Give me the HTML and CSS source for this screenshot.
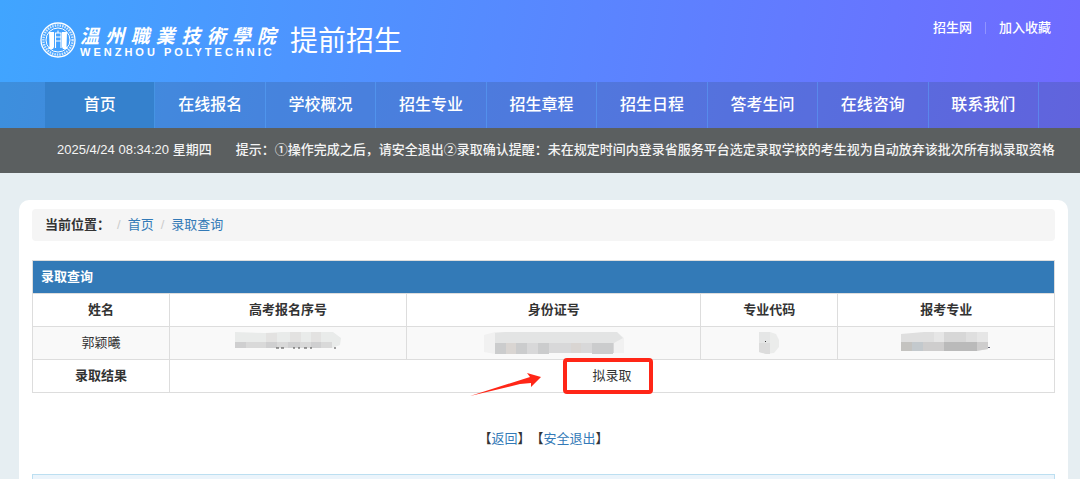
FILE: index.html
```html
<!DOCTYPE html>
<html lang="zh-CN">
<head>
  <meta charset="UTF-8" />
  <meta name="viewport" content="width=device-width, initial-scale=1.0" />
  <title>提前招生</title>
  <link rel="stylesheet" href="styles.css">
</head>
<body>
  <header>
    <div class="top">
      <a class="brand" href="#index">
        <svg class="seal" viewBox="0 0 36 36" width="36" height="36" aria-hidden="true">
          <circle cx="18" cy="18" r="17" fill="none" stroke="#fff" stroke-width="1.3"/>
          <circle cx="18" cy="18" r="14.6" fill="none" stroke="#fff" stroke-width="2.4" stroke-dasharray="1.5 1" opacity=".75"/>
          <circle cx="18" cy="18" r="12" fill="none" stroke="#fff" stroke-width="1"/>
          <path d="M9 10h5v15l-1 2H8l1.5-2.5zM27 10h-5v15l1 2h5l-1.5-2.5z" fill="#fff"/>
          <path d="M15.5 26V11h5.5v15M15.5 15h5M15.5 19h5M18 8.5V11" fill="none" stroke="#fff" stroke-width="1.1"/>
        </svg>
        <span class="school">
          <span class="school-cn">溫州職業技術學院</span>
          <span class="school-en">WENZHOU POLYTECHNIC</span>
        </span>
        <span class="site-name">提前招生</span>
      </a>
      <div class="top-links">
        <a href="#home">招生网</a>
        <i></i>
        <a href="#favorite">加入收藏</a>
      </div>
    </div>
    <nav>
      <a class="active" href="#index">首页</a>
      <a href="#signup">在线报名</a>
      <a href="#about">学校概况</a>
      <a href="#majors">招生专业</a>
      <a href="#rules">招生章程</a>
      <a href="#schedule">招生日程</a>
      <a href="#faq">答考生问</a>
      <a href="#consult">在线咨询</a>
      <a href="#contact">联系我们</a>
    </nav>
  </header>

  <div class="notice">
    <span>2025/4/24 08:34:20 星期四</span>
    <span>提示：①操作完成之后，请安全退出②录取确认提醒：未在规定时间内登录省服务平台选定录取学校的考生视为自动放弃该批次所有拟录取资格</span>
  </div>

  <main>
    <div class="breadcrumb">
      <b>当前位置：</b>
      <i>/</i>
      <a href="#index">首页</a>
      <i>/</i>
      <a href="#result">录取查询</a>
    </div>

    <table class="result">
      <colgroup>
        <col class="col-name">
        <col class="col-exam">
        <col class="col-id">
        <col class="col-code">
        <col class="col-major">
      </colgroup>
      <thead>
        <tr><th class="title" colspan="5">录取查询</th></tr>
        <tr>
          <th>姓名</th>
          <th>高考报名序号</th>
          <th>身份证号</th>
          <th>专业代码</th>
          <th>报考专业</th>
        </tr>
      </thead>
      <tbody>
        <tr class="striped">
          <td>郭颖曦</td>
          <td>
            <svg class="mask" viewBox="0 0 106 22" width="106" height="22" aria-hidden="true">
              <path d="M0 0l30 1 17-1h51l8 6-1 7-8 3H0z" fill="#e9ebea"/>
              <path d="M31 1h11v10H31zM55 0h11v11H55zM76 0h10v11H76z" fill="#e3e2e1"/>
              <path d="M0 10h97v6H0z" fill="#d9d9d9"/>
              <path d="M0 10h11v6H0zM31 10h11v6H31zM53 10h12v6H53zM76 10h10v6H76z" fill="#cfcfd0"/>
              <path d="M41 16h3M46 16h3M58 16h2M63 16h2M69 16h3M75 16h2M99 16h2" stroke="#444" stroke-width="1"/>
            </svg>
          </td>
          <td>
            <svg class="mask" viewBox="0 0 140 22" width="140" height="22" aria-hidden="true">
              <path d="M0 3l11-3h122l7 6v15H64l-20 1H11L0 20z" fill="#f1f1f1"/>
              <path d="M11 1l10-1h112l6 6-9 5v10H11z" fill="#e3e4e4"/>
              <path d="M11 11h119v10H64v1H11z" fill="#d8d8d9"/>
              <path d="M11 11h11v11H11zM32 11h11v11H32zM54 11h11v11H54zM108 11h21v11h-21z" fill="#cbcccd"/>
              <path d="M22 11h10v11H22zM87 11h10v10H87z" fill="#d9d5d2"/>
            </svg>
          </td>
          <td>
            <svg class="mask" viewBox="0 0 20 22" width="20" height="22" aria-hidden="true">
              <path d="M0 0h11l6 2 3 6v7l-5 6-8 1-7-2z" fill="#ebeceb"/>
              <path d="M0 0h11v11H0z" fill="#e5e6e6"/>
              <path d="M0 11h11v11H7l-7-2z" fill="#dcdcdc"/>
              <path d="M6 9h1v1H6z" fill="#333"/>
            </svg>
          </td>
          <td>
            <svg class="mask" viewBox="0 0 90 22" width="90" height="22" aria-hidden="true">
              <path d="M0 2l23-2h64v17l-12 2H0z" fill="#dfdfdf"/>
              <path d="M33 0h10v10H33zM76 0h11v10H76z" fill="#e6e6e6"/>
              <path d="M43 0h22v10H43z" fill="#d7d7d7"/>
              <path d="M0 10h87v7l-12 2H0z" fill="#cecdcd"/>
              <path d="M0 10h11v9H0z" fill="#c4c3c0"/>
              <path d="M11 10h11v9H11z" fill="#c3c9cd"/>
              <path d="M43 10h33v9H43z" fill="#bababa"/>
              <path d="M87 15h2v1h-2z" fill="#667"/>
            </svg>
          </td>
        </tr>
        <tr>
          <th>录取结果</th>
          <td colspan="4">
            <span class="answer">拟录取
              <svg class="arrow" viewBox="0 0 72 26" width="72" height="26" aria-hidden="true">
                <path d="M0 23L60 4 57 0l14 4-10 10v-4l-11 1z" fill="#ff2617"/>
              </svg>
              <span class="frame"></span>
            </span>
          </td>
        </tr>
      </tbody>
    </table>

    <div class="actions">
      <span>【<a href="#back">返回</a>】</span>
      <span>【<a href="#logout">安全退出</a>】</span>
    </div>

    <div class="info-panel"></div>
  </main>
</body>
</html>
```
FILE: styles.css
```css
* {
  margin: 0;
  padding: 0;
  box-sizing: border-box;
}
body {
  display: flex;
  flex-direction: column;
  min-height: 100vh;
  background: #e6eef2;
  color: #333;
  font-family: 'Liberation Sans', 'Noto Sans CJK SC', sans-serif;
  font-size: 13px;
  line-height: 20px;
}
a {
  color: #337ab7;
  text-decoration: none;
}
header {
  background: linear-gradient(100deg, #40a5ff, #706aff);
}
.top {
  display: flex;
  justify-content: space-between;
  align-items: flex-start;
  height: 82px;
  padding: 18px 29px 0 40px;
}
.brand {
  display: flex;
  align-items: center;
  color: #fff;
}
.school {
  display: flex;
  flex-direction: column;
  width: 196px;
  margin: 0 14px 0 4px;
}
.school-cn {
  font-family: 'Noto Sans CJK TC', sans-serif;
  font-size: 19px;
  font-style: italic;
  font-weight: bold;
  line-height: 24px;
  text-align-last: justify;
}
.school-en {
  font-size: 11px;
  font-weight: bold;
  line-height: 11px;
  letter-spacing: 3px;
  white-space: nowrap;
}
.site-name {
  padding-top: 4px;
  font-size: 28px;
  font-weight: 400;
  line-height: 40px;
}
.top-links {
  display: flex;
  align-items: center;
  gap: 13px;
}
.top-links a {
  color: #fff;
  font-weight: 500;
}
.top-links i {
  width: 1px;
  height: 12px;
  background: rgba(255, 255, 255, 0.25);
}
nav {
  display: grid;
  grid-template-columns: repeat(9, 1fr);
  padding: 0 41px 0 45px;
  background: rgba(50, 80, 120, 0.25);
}
nav a {
  border-right: 1px solid rgba(90, 170, 255, 0.45);
  color: #fff;
  font-size: 16px;
  font-weight: 500;
  line-height: 46px;
  text-align: center;
}
nav a.active {
  background: #3581cd;
}
.notice {
  display: flex;
  gap: 24px;
  padding: 12px 20px 13px 57px;
  background: #5b5f60;
  color: #f4f4f4;
  font-weight: 500;
  white-space: nowrap;
}
main {
  flex: 1;
  display: flex;
  flex-direction: column;
  margin: 27px 12px 0 19px;
  padding: 9px 13px 0;
  background: #fff;
  border-radius: 10px 10px 0 0;
}
.breadcrumb {
  display: flex;
  gap: 7px;
  padding: 6px 13px;
  background: #f5f5f5;
  border-radius: 4px;
}
.breadcrumb i {
  color: #ccc;
  font-style: normal;
}
.result {
  width: 100%;
  margin-top: 19px;
  border-collapse: collapse;
  table-layout: fixed;
  text-align: center;
}
.result th,
.result td {
  height: 33px;
  border: 1px solid #ddd;
  padding: 0 8px;
}
.result .title {
  background: #337ab7;
  color: #fff;
  text-align: left;
}
.col-name {
  width: 13.4%;
}
.col-exam {
  width: 23.2%;
}
.col-id {
  width: 28.8%;
}
.col-code {
  width: 13.4%;
}
.col-major {
  width: 21.2%;
}
.striped {
  background: #f9f9f9;
}
.mask {
  display: block;
  margin: 0 auto;
}
.answer {
  position: relative;
  display: inline-block;
}
.frame {
  position: absolute;
  top: -8px;
  left: -29px;
  width: 90px;
  height: 36px;
  border: 4px solid #ff2617;
  border-radius: 4px;
}
.arrow {
  position: absolute;
  top: 7px;
  left: -122px;
}
.actions {
  display: flex;
  justify-content: center;
  margin: 36px 0 25px;
}
.info-panel {
  flex: 1;
  border: 1px solid #bcdff1;
  border-bottom: 0;
  background: #ebf4fb;
}
```
